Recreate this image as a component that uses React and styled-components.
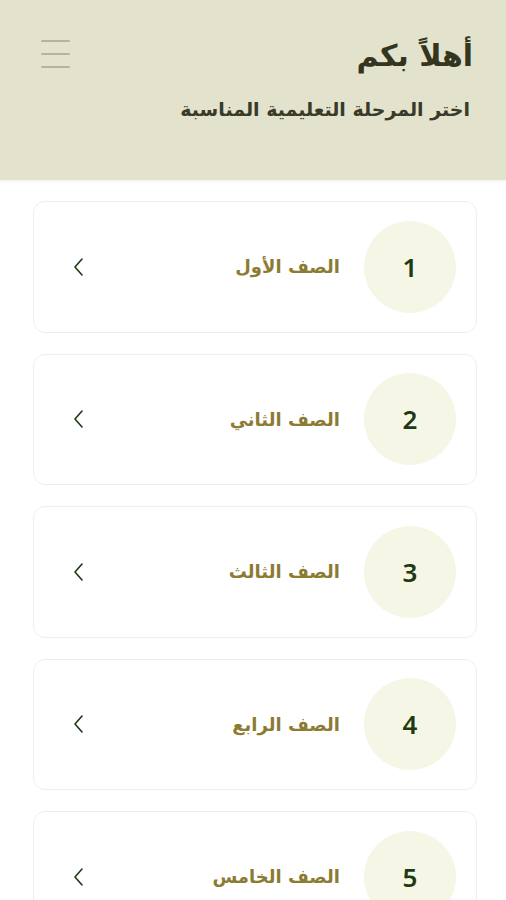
import React from 'react';
import styled, {createGlobalStyle} from "styled-components";

const GlobalStyle = createGlobalStyle`
  html, body {
    margin: 0;
    padding: 0;
    background: #ffffff;
  }
  body {
    font-family: "DejaVu Sans", "Noto Sans", sans-serif;
  }
`;

const grades = [
    {id: 1, name: "الصف الأول"},
    {id: 2, name: "الصف الثاني"},
    {id: 3, name: "الصف الثالث"},
    {id: 4, name: "الصف الرابع"},
    {id: 5, name: "الصف الخامس"},
];

function App() {
    return (
        <Page dir="rtl">
            <GlobalStyle />
            <Header>
                <div className="top">
                    <Title>أهلاً بكم</Title>
                    <MenuButton aria-label="menu">
                        <span />
                        <span />
                        <span />
                    </MenuButton>
                </div>
                <Subtitle>اختر المرحلة التعليمية المناسبة</Subtitle>
            </Header>
            <List>
                {grades.map((g) => (
                    <Card key={g.id}>
                        <Badge>{g.id}</Badge>
                        <Label>{g.name}</Label>
                        <Chevron viewBox="0 0 24 24">
                            <path d="M15 4 L8 12 L15 20" />
                        </Chevron>
                    </Card>
                ))}
            </List>
        </Page>
    );
}

export default App;

const Page = styled.div`
  width: 506px;
  height: 900px;
  overflow: hidden;
  background: #ffffff;
`;

const Header = styled.header`
  background-color: #e3e3cd;
  height: 180px;
  box-sizing: border-box;
  padding: 30px 33px 0 41px;
  box-shadow: 0 1px 3px rgba(0, 0, 0, 0.08);

  .top {
    display: flex;
    justify-content: space-between;
    align-items: flex-start;
  }
`;

const Title = styled.h1`
  margin: 0;
  font-size: 30px;
  font-weight: bold;
  color: #34351f;
  line-height: 52px;
`;

const MenuButton = styled.div`
  display: flex;
  flex-direction: column;
  gap: 11px;
  padding-top: 10px;

  span {
    display: block;
    width: 29px;
    height: 2px;
    background: #b3b3a2;
    border-radius: 1px;
  }
`;

const Subtitle = styled.p`
  margin: 16px 3px 0 0;
  font-size: 19px;
  font-weight: bold;
  color: #3a3a28;
`;

const List = styled.div`
  display: flex;
  flex-direction: column;
  gap: 21px;
  padding: 21px 29px 0 33px;
`;

const Card = styled.div`
  height: 131.5px;
  box-sizing: border-box;
  border: 1px solid #efefea;
  border-radius: 12px;
  display: flex;
  align-items: center;
  padding: 0 20px 0 33px;
  flex-shrink: 0;
`;

const Badge = styled.div`
  width: 92px;
  height: 92px;
  border-radius: 50%;
  background: #f6f6e6;
  display: flex;
  align-items: center;
  justify-content: center;
  font-family: "Noto Sans", sans-serif;
  font-size: 26px;
  font-weight: 600;
  color: #1e3a10;
  flex-shrink: 0;
`;

const Label = styled.div`
  margin-right: 24px;
  font-size: 18px;
  font-weight: bold;
  color: #8c7b32;
  flex: 1;
`;

const Chevron = styled.svg`
  width: 24px;
  height: 24px;
  fill: none;
  stroke: #1e3a10;
  stroke-width: 1.6;
  stroke-linecap: round;
  stroke-linejoin: round;
`;
